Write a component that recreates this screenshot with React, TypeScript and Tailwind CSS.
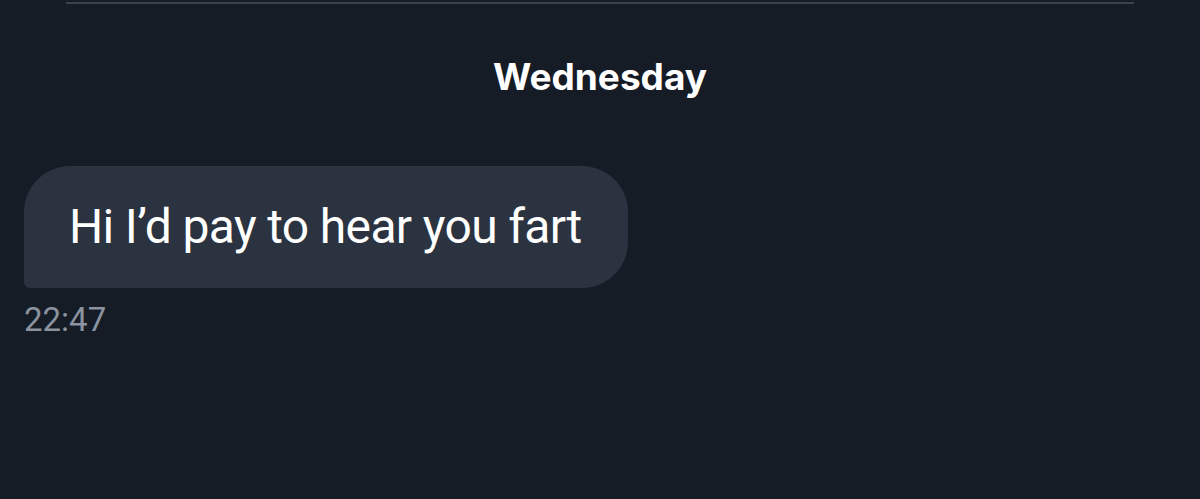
export default function App() {
  return (
    <div className="w-[1200px] h-[499px] bg-[#161c26] font-['Roboto','Liberation_Sans',sans-serif] overflow-hidden">
      <div className="mx-[66px] pt-[2px]">
        <div className="h-[2px] bg-[#3b434f]"></div>
      </div>

      {/* day divider */}
      <div className="flex justify-center pt-[49px]">
        <span className="font-['Inter','Liberation_Sans',sans-serif] text-[37px] leading-[48px] font-bold text-white">Wednesday</span>
      </div>

      {/* message */}
      <div className="pl-[24px] pt-[65px]">
        <div className="inline-flex items-center h-[122px] pl-[45px] pr-[46px] bg-[#2a333f] rounded-[46px] rounded-bl-[6px]">
          <span className="text-[48px] text-white leading-none tracking-[-0.65px]">Hi I’d pay to hear you fart</span>
        </div>
        <div className="mt-[12px] text-[33px] leading-[40px] text-[#8a939f]">22:47</div>
      </div>
    </div>
  );
}
